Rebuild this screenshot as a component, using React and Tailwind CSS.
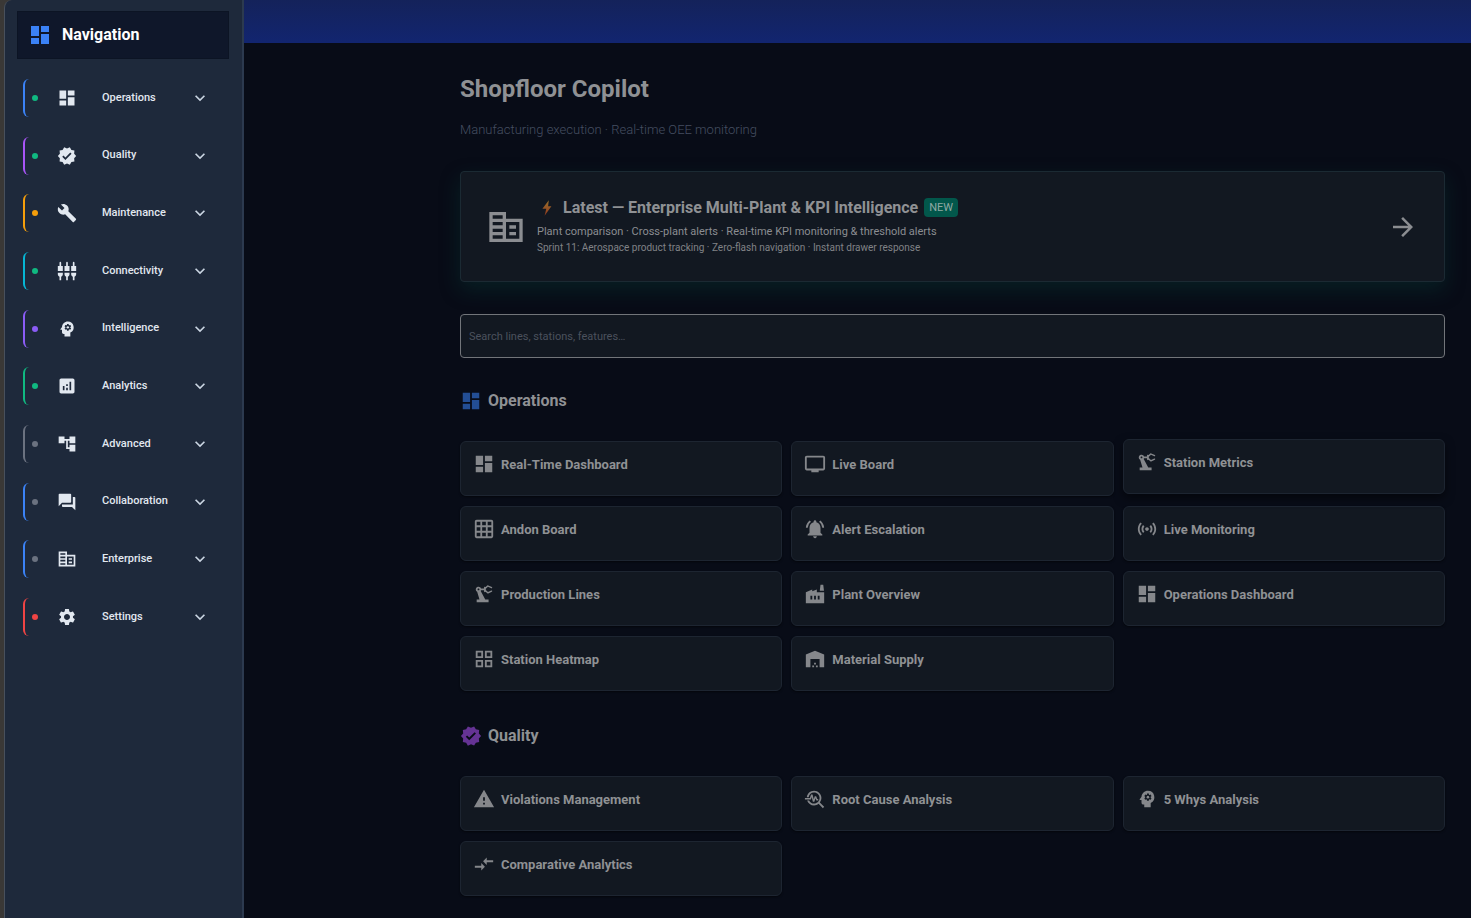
import React from 'react';
import {
  MdAccountTree,
  MdAnalytics,
  MdArrowForward,
  MdBuild,
  MdCompareArrows,
  MdCorporateFare,
  MdDashboard,
  MdExpandMore,
  MdFactory,
  MdForum,
  MdGridOn,
  MdGridView,
  MdNotificationsActive,
  MdPrecisionManufacturing,
  MdPsychology,
  MdSensors,
  MdSettings,
  MdSettingsInputComponent,
  MdTroubleshoot,
  MdTv,
  MdVerified,
  MdWarehouse,
  MdWarning,
} from 'react-icons/md';

const navItems = [
  { label: 'Operations', icon: MdDashboard, border: 'border-[#3b82f6]', dot: 'bg-[#10b981]' },
  { label: 'Quality', icon: MdVerified, border: 'border-[#a855f7]', dot: 'bg-[#10b981]' },
  { label: 'Maintenance', icon: MdBuild, border: 'border-[#f59e0b]', dot: 'bg-[#f59e0b]' },
  { label: 'Connectivity', icon: MdSettingsInputComponent, border: 'border-[#06b6d4]', dot: 'bg-[#10b981]' },
  { label: 'Intelligence', icon: MdPsychology, border: 'border-[#8b5cf6]', dot: 'bg-[#8b5cf6]' },
  { label: 'Analytics', icon: MdAnalytics, border: 'border-[#10b981]', dot: 'bg-[#10b981]' },
  { label: 'Advanced', icon: MdAccountTree, border: 'border-[#6b7280]', dot: 'bg-[#6b7280]' },
  { label: 'Collaboration', icon: MdForum, border: 'border-[#3b82f6]', dot: 'bg-[#6b7280]' },
  { label: 'Enterprise', icon: MdCorporateFare, border: 'border-[#3b82f6]', dot: 'bg-[#6b7280]' },
  { label: 'Settings', icon: MdSettings, border: 'border-[#ef4444]', dot: 'bg-[#ef4444]' },
];

const sections = [
  {
    title: 'Operations',
    icon: MdDashboard,
    color: 'text-[#234e94]',
    cards: [
      { label: 'Real-Time Dashboard', icon: MdDashboard },
      { label: 'Live Board', icon: MdTv },
      { label: 'Station Metrics', icon: MdPrecisionManufacturing, raised: true },
      { label: 'Andon Board', icon: MdGridOn },
      { label: 'Alert Escalation', icon: MdNotificationsActive },
      { label: 'Live Monitoring', icon: MdSensors },
      { label: 'Production Lines', icon: MdPrecisionManufacturing },
      { label: 'Plant Overview', icon: MdFactory },
      { label: 'Operations Dashboard', icon: MdDashboard },
      { label: 'Station Heatmap', icon: MdGridView },
      { label: 'Material Supply', icon: MdWarehouse },
    ],
  },
  {
    title: 'Quality',
    icon: MdVerified,
    color: 'text-[#653394]',
    cards: [
      { label: 'Violations Management', icon: MdWarning },
      { label: 'Root Cause Analysis', icon: MdTroubleshoot },
      { label: '5 Whys Analysis', icon: MdPsychology },
      { label: 'Comparative Analytics', icon: MdCompareArrows },
    ],
  },
];

const NavItem = ({ label, icon: Icon, border, dot }) => (
  <button
    type="button"
    className={`flex h-[38px] w-full items-center rounded-md border-l-2 pl-[7px] pr-[19px] text-left ${border}`}
  >
    <span className={`size-1.5 shrink-0 rounded-full ${dot}`} />
    <Icon size={20} className="ml-[19px] shrink-0 text-slate-200" />
    <span className="ml-[25px] flex-1 text-[11px] font-medium text-slate-200">{label}</span>
    <MdExpandMore size={20} className="shrink-0 text-slate-300" />
  </button>
);

const Sidebar = () => (
  <aside className="w-[240px] shrink-0 rounded-tl-lg border-l border-r-2 border-l-[#48505c] border-r-[#2c3a4f] bg-[#1e293b] pl-3 pr-[13px] pt-[11px]">
    <div className="flex h-12 items-center gap-2.5 border border-[#0c1424] bg-[#0f172a] pl-[10px]">
      <MdDashboard size={24} className="text-[#3b82f6]" />
      <h2 className="text-base font-bold text-white">Navigation</h2>
    </div>
    <nav className="mt-[10px] grid min-h-[577px] auto-rows-fr items-center pl-1.5">
      {navItems.map((item) => (
        <NavItem key={item.label} {...item} />
      ))}
    </nav>
  </aside>
);

const Bolt = () => (
  <svg width="12" height="16" viewBox="0 0 12 16" aria-hidden="true">
    <defs>
      <linearGradient id="bolt" x1="0" y1="0" x2="0" y2="1">
        <stop offset="0" stopColor="#99702a" />
        <stop offset="1" stopColor="#91391f" />
      </linearGradient>
    </defs>
    <path d="M7.8 0.3 1.4 8.8h3.9L3.6 15.7 10.4 6.2H7.1z" fill="url(#bolt)" />
  </svg>
);

const LatestBanner = () => (
  <a
    href="#latest"
    className="mt-[31px] flex h-[111px] items-center rounded-sm border border-[#1b2a33] bg-[#121821] pl-[25px] pr-[26px] shadow-[0_8px_20px_rgba(8,60,55,0.4)]"
  >
    <MdCorporateFare size={40} className="shrink-0 text-[#8b8d91]" />
    <div className="ml-[11px] flex-1 pb-0.5">
      <div className="flex h-6 items-center pl-1">
        <Bolt />
        <h2 className="ml-2.5 text-base font-bold text-[#8f9194]">
          Latest — Enterprise Multi-Plant &amp; KPI Intelligence
        </h2>
        <span className="ml-1.5 rounded-sm bg-[#02574b] px-[5px] text-[11px] leading-[19px] text-[#8fa9a4]">NEW</span>
      </div>
      <p className="mt-1 text-[11px] leading-4 text-[#8b8d91]">
        Plant comparison · Cross-plant alerts · Real-time KPI monitoring &amp; threshold alerts
      </p>
      <p className="text-[10px] leading-4 text-[#808286]">
        Sprint 11: Aerospace product tracking · Zero-flash navigation · Instant drawer response
      </p>
    </div>
    <MdArrowForward size={30} className="shrink-0 text-[#8b8d91]" />
  </a>
);

const Card = ({ label, icon: Icon, raised }) => (
  <a
    href="#open"
    className={`flex h-[55px] items-start rounded-md border border-[#1d2531] bg-[#121821] pl-3 pt-[11px] text-[#8f9194] ${
      raised ? '-translate-y-0.5 shadow-[0_4px_10px_rgba(0,0,0,0.5)]' : 'shadow-[0_1px_2px_rgba(0,0,0,0.5)]'
    }`}
  >
    <Icon size={22} className="shrink-0 text-[#85878b]" />
    <span className="ml-1.5 mt-0.5 text-[13px] font-bold leading-5">{label}</span>
  </a>
);

const Section = ({ title, icon: Icon, color, cards }) => (
  <section className="mt-8 pb-0.5">
    <div className="flex h-[22px] items-center gap-1.5">
      <Icon size={22} className={color} />
      <h2 className="text-base font-bold text-[#8f9194]">{title}</h2>
    </div>
    <div className="mt-[29px] grid grid-cols-3 gap-x-[9px] gap-y-[10px]">
      {cards.map((card) => (
        <Card key={card.label} {...card} />
      ))}
    </div>
  </section>
);

const App = () => (
  <div className="flex min-h-screen bg-[#3a3836] pl-1 font-[Roboto,sans-serif]">
    <Sidebar />
    <div className="flex-1 bg-[#080c17]">
      <header className="h-[43px] bg-linear-to-b from-[#14225a] to-[#122570]" />
      <main className="pb-5 pl-[216px] pr-[26px] pt-[30px]">
        <h1 className="text-2xl font-bold text-[#8f9194]">Shopfloor Copilot</h1>
        <p className="mt-[15px] text-[13px] font-light leading-5 text-[#454e61]">
          Manufacturing execution · Real-time OEE monitoring
        </p>
        <LatestBanner />
        <input
          type="search"
          aria-label="Search"
          placeholder="Search lines, stations, features…"
          className="mt-8 block h-11 w-full rounded-sm border border-[#72757a] bg-[#121821] px-2 text-[11px] text-[#8f9194] outline-none placeholder:text-[#4b515d]"
        />
        {sections.map((section) => (
          <Section key={section.title} {...section} />
        ))}
      </main>
    </div>
  </div>
);

export default App;
